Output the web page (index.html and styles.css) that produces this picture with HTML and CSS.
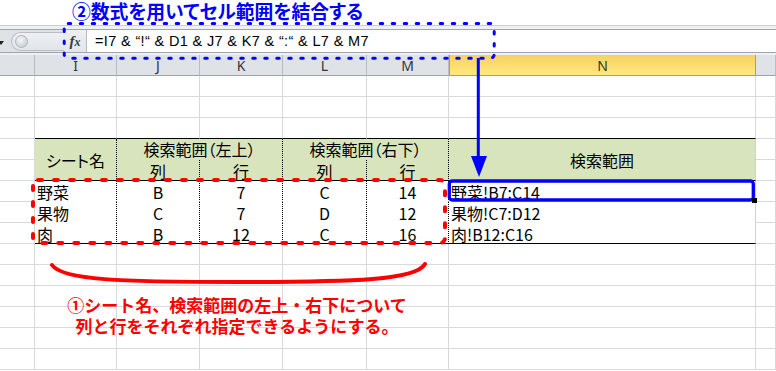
FILE: index.html
```html
<!DOCTYPE html>
<html lang="ja">
<head>
<meta charset="utf-8">
<title>セル範囲の結合</title>
<link rel="stylesheet" href="styles.css">
</head>
<body>
<div class="page">
  <div class="title">②数式を用いてセル範囲を結合する</div>
  <div class="fbar">
    <div class="fbar-row">
      <div class="namebox"><span class="drop"></span><span class="grip"><span class="knob"></span></span></div>
      <div class="fx"><i>f</i><i class="fx-x">x</i></div>
      <div class="formula">=I7 &amp; “!“ &amp; D1 &amp; J7 &amp; K7 &amp; “:“ &amp; L7 &amp; M7</div>
    </div>
  </div>
  <div class="grid">
    <div class="ch"></div><div class="ch">I</div><div class="ch">J</div><div class="ch">K</div><div class="ch">L</div><div class="ch">M</div><div class="ch sel">N</div><div class="ch"></div>

    <div class="c"></div><div class="c"></div><div class="c"></div><div class="c"></div><div class="c"></div><div class="c"></div><div class="c"></div><div class="c"></div>
    <div class="c"></div><div class="c"></div><div class="c"></div><div class="c"></div><div class="c"></div><div class="c"></div><div class="c"></div><div class="c"></div>
    <div class="c"></div><div class="c tt"></div><div class="c tt"></div><div class="c tt"></div><div class="c tt"></div><div class="c tt"></div><div class="c tt"></div><div class="c"></div>

    <div class="c"></div>
    <div class="th name">シート名</div>
    <div class="th grp">検索範囲（左上）</div>
    <div class="th grp">検索範囲（右下）</div>
    <div class="th res">検索範囲</div>
    <div class="c"></div>
    <div class="c"></div>
    <div class="th sub">列</div><div class="th sub">行</div><div class="th sub">列</div><div class="th sub">行</div>
    <div class="c"></div>

    <div class="c"></div><div class="td l">野菜</div><div class="td">B</div><div class="td">7</div><div class="td">C</div><div class="td">14</div><div class="td l res">野菜!B7:C14</div><div class="c"></div>
    <div class="c"></div><div class="td l">果物</div><div class="td">C</div><div class="td">7</div><div class="td">D</div><div class="td">12</div><div class="td l res">果物!C7:D12</div><div class="c"></div>
    <div class="c"></div><div class="td l last">肉</div><div class="td last">B</div><div class="td last">12</div><div class="td last">C</div><div class="td last">16</div><div class="td l res last">肉!B12:C16</div><div class="c"></div>

    <div class="c"></div><div class="c"></div><div class="c"></div><div class="c"></div><div class="c"></div><div class="c"></div><div class="c"></div><div class="c"></div>
    <div class="c"></div><div class="c"></div><div class="c"></div><div class="c"></div><div class="c"></div><div class="c"></div><div class="c"></div><div class="c"></div>
    <div class="c"></div><div class="c"></div><div class="c"></div><div class="c"></div><div class="c"></div><div class="c"></div><div class="c"></div><div class="c"></div>
    <div class="c"></div><div class="c"></div><div class="c"></div><div class="c"></div><div class="c"></div><div class="c"></div><div class="c"></div><div class="c"></div>
    <div class="c"></div><div class="c"></div><div class="c"></div><div class="c"></div><div class="c"></div><div class="c"></div><div class="c"></div><div class="c"></div>
    <div class="c"></div><div class="c"></div><div class="c"></div><div class="c"></div><div class="c"></div><div class="c"></div><div class="c"></div><div class="c"></div>
  </div>

  <svg class="ov" width="776" height="371" viewBox="0 0 776 371" aria-hidden="true">
    <rect x="64.2" y="23.5" width="430" height="34.8" rx="4" fill="none" stroke="#0000ff" stroke-width="3" stroke-dasharray="2.5 9.5" stroke-linecap="round"/>
    <line x1="478.3" y1="58" x2="478.3" y2="160" stroke="#0000ff" stroke-width="3"/>
    <polygon points="471,156 487,156 479,177" fill="#0000ff"/>
    <rect x="449.3" y="181" width="304" height="19" rx="3" fill="none" stroke="#0000ff" stroke-width="3.3"/>
    <rect x="752" y="198" width="5" height="5" fill="#000"/>
    <rect x="33" y="180" width="412" height="63" rx="5" fill="none" stroke="#ff0000" stroke-width="4" stroke-dasharray="4 12" stroke-linecap="round"/>
    <path d="M52,265 C62,280 120,282 238,282 C356,282 416,280 425,264" fill="none" stroke="#ff0000" stroke-width="4" stroke-linecap="round"/>
  </svg>

  <div class="note">①シート名、検索範囲の左上・右下について<br>列と行をそれぞれ指定できるようにする。</div>
</div>
</body>
</html>
```

FILE: styles.css
```css
html, body {
  margin: 0;
  padding: 0;
  background: #fff;
}
body {
  font-family: "Noto Sans CJK JP", "Noto Sans", sans-serif;
  color: #000;
}
.page {
  position: relative;
  width: 776px;
  height: 371px;
  overflow: hidden;
  font-feature-settings: "palt";
}
.title {
  height: 25px;
  box-sizing: border-box;
  padding-left: 72px;
  padding-top: 1px;
  font-size: 18.8px;
  font-weight: bold;
  line-height: 20px;
  color: #0000ff;
  white-space: nowrap;
}
.fbar {
  border-top: 1px solid #c9ced4;
  padding: 3px 0 2px;
  background: #eef0f3;
}
.fbar-row {
  display: flex;
  height: 22px;
  border-top: 1px solid #9ea5ae;
  border-bottom: 1px solid #9ea5ae;
  background: #dfe3e8;
}
.namebox {
  position: relative;
  width: 64px;
  display: flex;
  align-items: center;
}
.drop {
  position: absolute;
  left: -2px;
  top: 11px;
  width: 0;
  height: 0;
  border-left: 3.5px solid transparent;
  border-right: 3.5px solid transparent;
  border-top: 4px solid #222;
}
.grip {
  margin-left: 11px;
  flex: 1;
  height: 17px;
  border: 1px solid #b9bec5;
  border-right: none;
  border-radius: 10px 0 0 10px;
  background: linear-gradient(#eef0f3, #e2e5e9);
  display: flex;
  align-items: center;
}
.knob {
  margin-left: 3px;
  width: 11px;
  height: 11px;
  border-radius: 50%;
  background: radial-gradient(circle at 40% 35%, #f4f5f6, #c2c6cb);
  border: 1px solid #b0b5bb;
}
.fx {
  width: 22px;
  display: flex;
  align-items: center;
  justify-content: center;
  font-family: "Liberation Serif", serif;
  font-size: 15px;
  font-weight: bold;
  color: #3a3a3a;
  background: linear-gradient(#eef0f3, #e2e5e9);
}
.fx-x {
  font-size: 12px;
  margin-top: 3px;
}
.formula {
  flex: 1;
  background: #fff;
  border-left: 1px solid #b4bac1;
  padding-left: 8px;
  font-family: "Liberation Sans", sans-serif;
  font-size: 14.5px;
  line-height: 22px;
  white-space: nowrap;
  letter-spacing: 0.35px;
}
.grid {
  display: grid;
  grid-template-columns: 35px 82px 83px 83px 84px 82px 307px 20px;
  grid-auto-rows: 21px;
}
.grid > div {
  box-sizing: border-box;
  white-space: nowrap;
}
.c {
  border-right: 1px solid #d9d9d9;
  border-bottom: 1px solid #d9d9d9;
}
.c.tt {
  border-bottom-color: #000;
}
.ch {
  background: #dfe3e8;
  border-right: 1px solid #b8bdc4;
  border-bottom: 1px solid #9da3aa;
  font-family: "Noto Sans", sans-serif;
  font-size: 14px;
  color: #333;
  text-align: center;
  padding-top: 2px;
  line-height: 18px;
}
.ch.sel {
  background: linear-gradient(#f9d061, #ffe97c);
  border-left: 1px solid #c99a3c;
  border-right: 1px solid #c99a3c;
  border-bottom: 1px solid #c99a3c;
}
.th {
  background: #d8e4bc;
  border-right: 1px dotted #000;
  border-bottom: 1px solid #000;
  display: flex;
  align-items: center;
  justify-content: center;
  font-size: 16px;
  line-height: 20px;
}
.th.name, .th.res {
  grid-row: span 2;
}
.th.grp {
  grid-column: span 2;
  border-bottom-color: transparent;
}
.th.res {
  border-right: 1px solid #d0d0d0;
}
.th.sub {
  padding-top: 2px;
}
.td {
  background: #fff;
  border-right: 1px dotted #000;
  border-bottom: 1px solid #fff;
  font-size: 16px;
  line-height: 20px;
  text-align: center;
  padding-top: 1px;
}
.td.l {
  text-align: left;
  padding-left: 2px;
}
.td.res {
  border-right: 1px solid #d0d0d0;
}
.td.last {
  border-bottom: 1px solid #000;
}
.ov {
  position: absolute;
  left: 0;
  top: 0;
  pointer-events: none;
}
.note {
  position: absolute;
  left: 37px;
  top: 294px;
  width: 400px;
  text-align: center;
  font-size: 17px;
  font-weight: bold;
  line-height: 21px;
  color: #ff0000;
  white-space: nowrap;
  font-feature-settings: normal;
}
```
